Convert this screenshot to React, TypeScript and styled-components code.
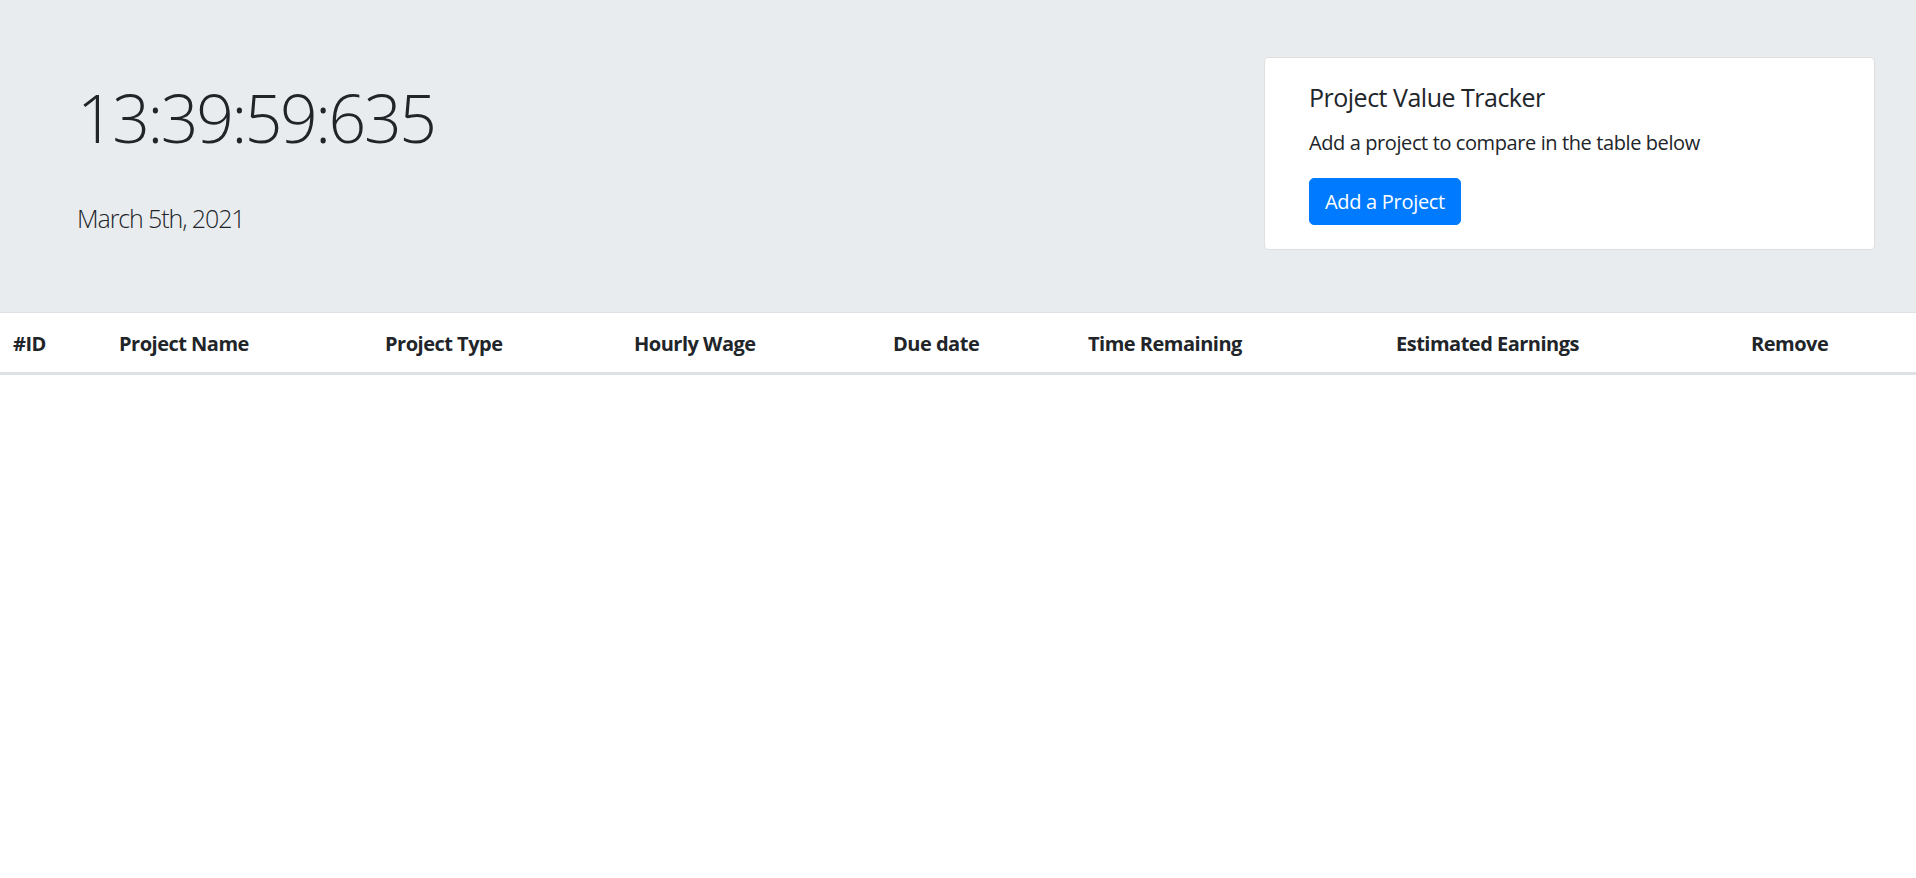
import React from "react";
import styled, { createGlobalStyle } from "styled-components";

const GlobalStyle = createGlobalStyle`
  html, body {
    margin: 0;
    padding: 0;
    background: #ffffff;
    color: #212529;
    font-family: "Open Sans", "Noto Sans", sans-serif;
    font-size: 20px;
    line-height: 1.5;
  }
  * { box-sizing: border-box; }
`;

const Jumbotron = styled.header`
  display: flex;
  justify-content: space-between;
  align-items: flex-start;
  height: 312px;
  background: #e9ecef;
`;

const ClockColumn = styled.div`
  display: flex;
  flex-direction: column;
  padding: 78px 0 0 77px;
`;

const Clock = styled.h1`
  margin: 0;
  font-size: 66px;
  font-weight: 300;
  line-height: 78px;
  letter-spacing: -2.4px;
  color: #212529;
`;

const DateLine = styled.p`
  margin: 44px 0 0;
  font-size: 25px;
  font-weight: 300;
  line-height: 1.5;
  letter-spacing: -1.1px;
  color: #212529;
`;

const Card = styled.section`
  display: flex;
  flex-direction: column;
  align-items: flex-start;
  width: 611px;
  height: 193px;
  margin: 57px 41px 0 0;
  padding: 24px 20px 0 44px;
  background: #ffffff;
  border: 1px solid rgba(0, 0, 0, 0.125);
  border-radius: 5px;
`;

const CardTitle = styled.h5`
  margin: 0 0 16px;
  font-size: 25px;
  font-weight: 500;
  line-height: 1.2;
  letter-spacing: -0.5px;
  color: #212529;
`;

const CardText = styled.p`
  margin: 0 0 20px;
  font-size: 20px;
  line-height: 1.5;
  letter-spacing: -0.4px;
  color: #212529;
`;

const PrimaryButton = styled.button`
  font-family: inherit;
  font-size: 20px;
  line-height: 1.5;
  padding: 7.5px 15px;
  color: #ffffff;
  background: #007bff;
  border: 1px solid #007bff;
  border-radius: 5px;
  letter-spacing: -0.3px;
  cursor: pointer;
`;

const Table = styled.table`
  width: 100%;
  border-collapse: collapse;
  table-layout: fixed;
  color: #212529;
`;

const HeadCell = styled.th<{ $w: number }>`
  width: ${(p) => p.$w}px;
  padding: 16px 15px 13px 15px;
  text-align: left;
  font-size: 20px;
  font-weight: 700;
  line-height: 1.5;
  letter-spacing: -0.5px;
  vertical-align: bottom;
  border-top: 1px solid #dee2e6;
  border-bottom: 3px solid #dee2e6;
  &:first-child {
    padding-left: 13px;
  }
`;

const columns: { label: string; w: number }[] = [
  { label: "#ID", w: 104 },
  { label: "Project Name", w: 266 },
  { label: "Project Type", w: 249 },
  { label: "Hourly Wage", w: 259 },
  { label: "Due date", w: 195 },
  { label: "Time Remaining", w: 308 },
  { label: "Estimated Earnings", w: 355 },
  { label: "Remove", w: 180 },
];

export default function App() {
  return (
    <>
      <GlobalStyle />
      <Jumbotron>
        <ClockColumn>
          <Clock>13:39:59:635</Clock>
          <DateLine>March 5th, 2021</DateLine>
        </ClockColumn>
        <Card>
          <CardTitle>Project Value Tracker</CardTitle>
          <CardText>Add a project to compare in the table below</CardText>
          <PrimaryButton type="button">Add a Project</PrimaryButton>
        </Card>
      </Jumbotron>
      <Table>
        <thead>
          <tr>
            {columns.map((c) => (
              <HeadCell key={c.label} $w={c.w}>
                {c.label}
              </HeadCell>
            ))}
          </tr>
        </thead>
        <tbody />
      </Table>
    </>
  );
}
